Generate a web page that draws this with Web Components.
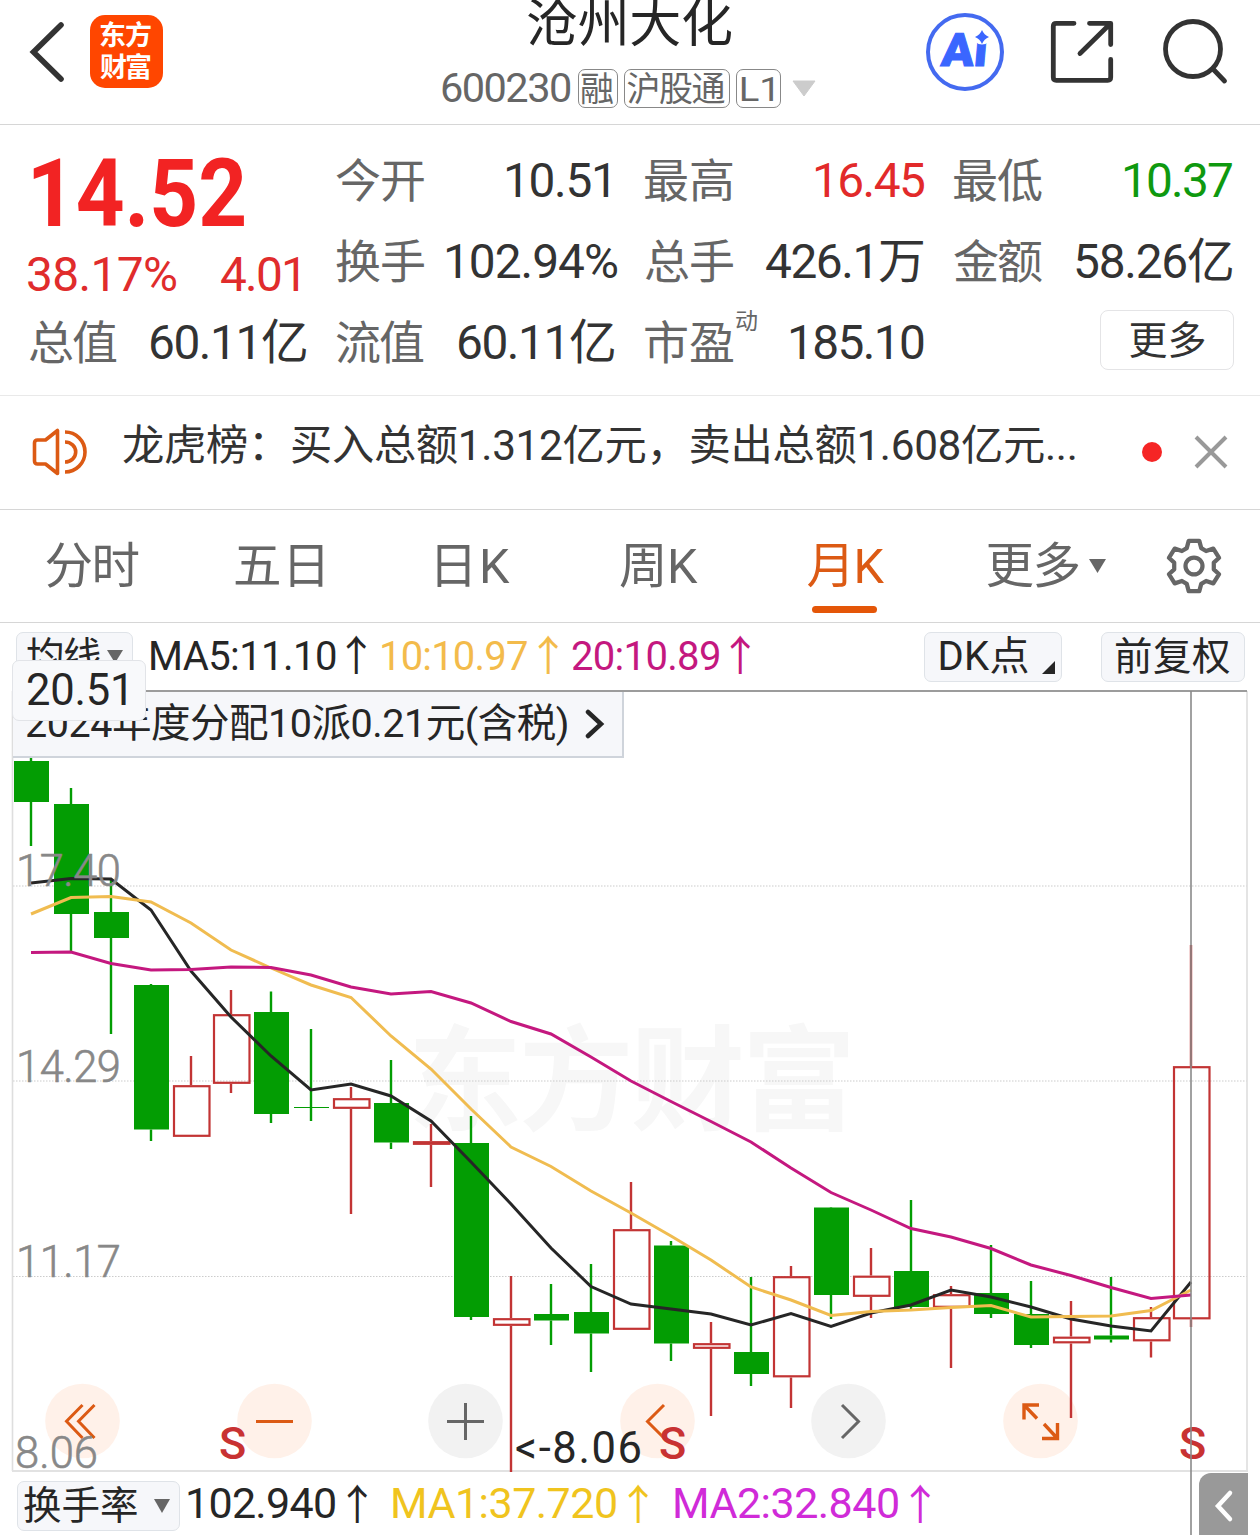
<!DOCTYPE html>
<html lang="zh-CN">
<head>
<meta charset="utf-8">
<title>沧州大化 600230</title>
<style>
    html, body { margin: 0; padding: 0; }
    body {
        width: 1260px;
        height: 1535px;
        overflow: hidden;
        background: #fff;
        color: #333;
        font-family: Roboto, "Noto Sans CJK SC", sans-serif;
    }
</style>
</head>
<body>
<stock-page></stock-page>

<script>
class BaseElement extends HTMLElement{
    constructor(){
        super();
        this.attachShadow({mode: "open"});
    }
    render(){
        const template = document.createElement("template");
        template.innerHTML = `<style>${this.getStyle()}</style>${this.getTemplate()}`;
        this.shadowRoot.replaceChildren(template.content.cloneNode(true));
    }
    connectedCallback(){
        this.render();
    }
}

class StockPage extends BaseElement{
    getTemplate(){
        return `
            <stock-header></stock-header>
            <stock-quote></stock-quote>
            <stock-notice></stock-notice>
            <period-tabs></period-tabs>
            <ma-bar></ma-bar>
            <k-chart></k-chart>
            <turnover-bar></turnover-bar>
        `;
    }
    getStyle(){
        return `
            :host { display: flex; flex-direction: column; width: 1260px; height: 1535px; }
        `;
    }
}

class StockHeader extends BaseElement{
    getTemplate(){
        return `
            <svg class="back" width="40" height="64" viewBox="0 0 40 64">
                <path d="M34 5 6.500 32 34 59" fill="none" stroke="#333" stroke-width="5.6" stroke-linecap="round"/>
            </svg>
            <div class="logo">
                <fit-text w="51">东方</fit-text>
                <fit-text w="51">财富</fit-text>
            </div>
            <div class="title">
                <fit-text class="name" w="204">沧州大化</fit-text>
                <div class="sub">
                    <fit-text class="code" w="128">600230</fit-text>
                    <span class="tag" style="width:38px"><fit-text w="31">融</fit-text></span>
                    <span class="tag" style="width:104px"><fit-text w="97">沪股通</fit-text></span>
                    <span class="tag" style="width:43px"><fit-text w="33" squeeze>L1</fit-text></span>
                    <svg class="down" width="24" height="17" viewBox="0 0 24 17">
                        <path d="M1 1h22L12 16z" fill="#ccc" stroke="#ccc" stroke-linejoin="round"/>
                    </svg>
                </div>
            </div>
            <svg class="ai" width="80" height="80" viewBox="0 0 80 80">
                <circle cx="40" cy="40" r="37" fill="none" stroke="#446af0" stroke-width="4"/>
                <text x="15.500" y="54.500" font-family="Roboto" font-weight="900" font-size="46" fill="#3a66ff" stroke="#3a66ff" textLength="46" lengthAdjust="spacingAndGlyphs" transform="translate(4.500 0) skewX(-5)">Ai</text>
                <circle cx="57" cy="23" r="9.500" fill="#fff"/>
                <path d="M57 18q2 5 7 7-5 2-7 7-2-5-7-7 5-2 7-7z" fill="#3a66ff"/>
            </svg>
            <svg class="share" width="66" height="66" viewBox="0 0 66 66" fill="none" stroke="#333" stroke-width="4.8" stroke-linecap="round" stroke-linejoin="round">
                <path d="M24 4.3H6.3q-3 0-3 3V58.300q0 3 3 3H57.700q3 0 3-3V40.500M39.500 4.300H60.700V25.500M60 5 30 34.500"/>
            </svg>
            <svg class="search" width="70" height="70" viewBox="0 0 70 70" fill="none" stroke="#333" stroke-width="4.8" stroke-linecap="round">
                <circle cx="33" cy="32" r="27.500"/>
                <path d="M53 52 64.500 64"/>
            </svg>
        `;
    }
    getStyle(){
        return `
            :host { display: flex; box-sizing: border-box; height: 125px; border-bottom: 1px solid #d6d6d6; }
            svg, .logo { flex: none; }
            .back { margin: 20px 0 0 27px; }
            .logo {
                display: flex; flex-direction: column; box-sizing: border-box;
                width: 73px; height: 73px; margin: 15px 0 0 23px; padding: 6px 0 0 10px;
                border-radius: 15px; background: #ff4600; color: #fff;
                font-size: 27px; font-weight: 700; line-height: 31.5px;
            }
            .title { width: 376px; margin-left: 277px; }
            .name { margin-left: 88px; font-size: 52px; line-height: 50px; color: #262626; }
            .sub { display: flex; align-items: center; height: 40px; margin-top: 18px; color: #666; }
            .code { margin: 0 8px 0 2px; font-size: 41.5px; line-height: 40px; }
            .tag {
                display: flex; justify-content: center; box-sizing: content-box; height: 37px; margin-right: 6px;
                border: 1px solid #888; border-radius: 7px; font-size: 34px; line-height: 38px;
            }
            .tag fit-text { margin-right: 2px; }
            .down { margin-left: 5px; }
            .ai { margin: 12px 0 0 109px; }
            .share { margin: 19px 0 0 45px; }
            .search { margin: 17px 0 0 44px; }
        `;
    }
}

class StockQuote extends BaseElement{
    getTemplate(){
        return `
            <div class="last">
                <fit-text class="price" w="211" squeeze>14.52</fit-text>
                <div class="change">
                    <fit-text w="148">38.17%</fit-text>
                    <fit-text w="78">4.01</fit-text>
                </div>
            </div>
            <quote-cell label="今开" w="103" end="7">10.51</quote-cell>
            <quote-cell label="最高" w="109" end="1" style="--value:#e22a2a">16.45</quote-cell>
            <quote-cell label="最低" w="108" end="1" style="--value:#0f990f">10.37</quote-cell>
            <quote-cell label="换手" w="171" end="-1">102.94%</quote-cell>
            <quote-cell label="总手" w="157" end="2">426.1万</quote-cell>
            <quote-cell label="金额" w="156" end="1">58.26亿</quote-cell>
            <quote-cell label="总值" w="155" end="1">60.11亿</quote-cell>
            <quote-cell label="流值" w="155" end="2">60.11亿</quote-cell>
            <quote-cell label="市盈" mark="动" w="134" end="1">185.10</quote-cell>
            <div class="more"><fit-text w="75">更多</fit-text></div>
        `;
    }
    getStyle(){
        return `
            :host {
                display: grid; box-sizing: border-box; height: 271px; padding: 16px 27px 0 28px;
                grid-template-columns: 279px 281px 281px 280px; grid-template-rows: repeat(3, 81px);
                column-gap: 28px; border-bottom: 1px solid #e9e9e9;
            }
            .last { grid-row: span 2; color: #f22323; }
            .price { margin-left: 5px; font-size: 95px; font-weight: 700; line-height: 105px; }
            .change {
                display: flex; justify-content: space-between; padding-right: 8px;
                font-size: 47.8px; line-height: 59px; color: #e02c2c;
            }
            .more {
                display: flex; justify-content: center; box-sizing: border-box; width: 134px; height: 60px;
                margin: 7px -1px 0 auto;
                border: 1.5px solid #e4e4e6; border-radius: 8px; font-size: 39px; line-height: 60px;
            }
        `;
    }
}

class QuoteCell extends BaseElement{
    getTemplate(){
        const mark = this.getAttribute("mark");
        return `
            <fit-text class="label" w="88">${this.getAttribute("label")}</fit-text>
            ${mark ? `<fit-text class="mark" w="21">${mark}</fit-text>` : ""}
            <fit-text class="value" w="${this.getAttribute("w")}" style="margin-right:${this.getAttribute("end")}px">${this.textContent}</fit-text>
        `;
    }
    getStyle(){
        return `
            :host { display: flex; line-height: 81px; }
            .label { margin-left: 1px; font-size: 46px; color: #666; }
            .mark { margin-left: 3px; font-size: 23px; line-height: 38px; color: #666; }
            .value { margin-left: auto; font-size: 47.8px; color: var(--value, #333); }
        `;
    }
}

class StockNotice extends BaseElement{
    getTemplate(){
        return `
            <svg width="56" height="48" viewBox="0 0 56 48" fill="none" stroke="#dc5a14" stroke-width="3.6">
                <path d="M25.500 2.500V45.500L13.500 36H5.500Q2.500 36 2.500 33V15Q2.500 12 5.500 12H13.500z" stroke-linejoin="round"/>
                <path d="M33 14a10.700 10 0 0 1 0 20M33 4a20 20 0 0 1 0 40"/>
            </svg>
            <fit-text w="952">龙虎榜：买入总额1.312亿元，卖出总额1.608亿元...</fit-text>
            <i></i>
            <svg class="close" width="34" height="34" viewBox="0 0 34 34">
                <path d="M2 2 32 32M32 2 2 32" stroke="#999" stroke-width="4"/>
            </svg>
        `;
    }
    getStyle(){
        return `
            :host {
                display: flex; align-items: center; box-sizing: border-box; height: 114px;
                padding: 0 32px 2px; border-bottom: 1px solid #d6d6d6;
            }
            fit-text { margin: 0 67px 11px 35px; font-size: 42.3px; line-height: 60px; }
            i { width: 20px; height: 20px; border-radius: 50%; background: #f52525; }
            .close { margin-left: 32px; }
        `;
    }
}

class PeriodTabs extends BaseElement{
    getTemplate(){
        return `
            <div><fit-text w="92">分时</fit-text></div>
            <div><fit-text w="88">五日</fit-text></div>
            <div><fit-text w="73">日K</fit-text></div>
            <div><fit-text w="78">周K</fit-text></div>
            <div class="active"><fit-text w="77">月K</fit-text><b></b></div>
            <div class="more">
                <fit-text w="91">更多</fit-text>
                <svg width="17" height="14" viewBox="0 0 17 14"><path d="M0 0h17L8.500 14z" fill="#666"/></svg>
            </div>
            <div>
                <svg width="56" height="58" viewBox="-29 -30 58 60" fill="none" stroke="#666" stroke-width="4.400">
                    <path d="M-5.500-26H5.500L7.500-18.500 12.500-15.500 20-18 26-8.500 20.500-3.500V3.500L26 8.500 20 18 12.500 15.500 7.500 18.500 5.500 26H-5.500L-7.500 18.500-12.500 15.500-20 18-26 8.500-20.500 3.500V-3.500L-26-8.500-20-18-12.500-15.500-7.500-18.500z" stroke-linejoin="round"/>
                    <circle r="8.800"/>
                </svg>
            </div>
        `;
    }
    getStyle(){
        return `
            :host {
                display: grid; grid-template-columns: 185px 188px 201px 170px 204px 197px 98px;
                box-sizing: border-box; height: 113px; border-bottom: 1px solid #d6d6d6;
                font-size: 48.5px; line-height: 114px; color: #666;
            }
            div { display: flex; justify-content: center; align-items: center; height: 112px; }
            fit-text { height: 112px; }
            .active { flex-direction: column; justify-content: flex-start; color: #dc5a14; }
            .active b { width: 65px; height: 7px; margin: -16px 4px 0 0; border-radius: 4px; background: #e45608; }
            .more svg { margin-left: 10px; }
        `;
    }
}

class MaBar extends BaseElement{
    getTemplate(){
        return `
            <bar-button style="width:117px">
                <fit-text w="74" style="margin-left:1px">均线</fit-text>
                <svg width="16" height="13" viewBox="0 0 16 13" style="margin-left:6px"><path d="M0 0h16L8 13z" fill="#666"/></svg>
            </bar-button>
            <fit-text w="185" style="margin-left:18px">MA5:11.10</fit-text>
            <up-arrow style="margin-left:10px"></up-arrow>
            <fit-text w="145" style="margin-left:15px;color:#f3bb4b">10:10.97</fit-text>
            <up-arrow style="margin-left:11px;color:#f3bb4b"></up-arrow>
            <fit-text w="147" style="margin-left:13px;color:#c4187f">20:10.89</fit-text>
            <up-arrow style="margin-left:11px;color:#c4187f"></up-arrow>
            <bar-button style="width:138px;margin-left:auto">
                <fit-text w="88" style="margin-left:2px;font-size:40px">DK点</fit-text>
                <svg width="13" height="13" viewBox="0 0 13 13" style="margin:22px -7px 0 13px"><path d="M13 0v13H0z" fill="#262626"/></svg>
            </bar-button>
            <bar-button style="width:144px;margin-left:39px"><fit-text w="114">前复权</fit-text></bar-button>
        `;
    }
    getStyle(){
        return `
            :host {
                display: flex; align-items: center; height: 67px; padding: 0 15px 0 16px; color: #262626;
                font-size: 40px; line-height: 67px;
            }
            bar-button fit-text { font-size: 38.5px; }
        `;
    }
}

class BarButton extends BaseElement{
    getTemplate(){
        return `<slot></slot>`;
    }
    getStyle(){
        return `
            :host {
                display: flex; align-items: center; justify-content: center; box-sizing: border-box;
                height: 50px; line-height: 51px; border: 1px solid #dfe3e8; border-radius: 7px; background: #f6f7fa;
            }
        `;
    }
}

class UpArrow extends BaseElement{
    getTemplate(){
        return `<fit-text w="21">↑</fit-text>`;
    }
    getStyle(){
        return `
            :host { display: block; margin-bottom: 6px; font-family: "Noto Sans CJK SC", sans-serif; font-size: 41.5px; }
        `;
    }
}

class KChart extends BaseElement{
    // [up, high, body top, body bottom, low], one per month
    getCandles(){
        return [
            [0, 757, 761, 802, 846], [0, 788, 804, 914, 951], [0, 880, 912, 938, 1034],
            [0, 984, 985, 1129.5, 1141], [1, 1056, 1085, 1137, 1137], [1, 990, 1014, 1084, 1093],
            [0, 991.5, 1012, 1114, 1123], [0, 1029, 1107, 1108, 1121], [1, 1087, 1098, 1109, 1214],
            [0, 1060, 1103, 1142.5, 1149], [1, 1124, 1141, 1145, 1187], [0, 1116, 1143, 1317, 1320],
            [1, 1276, 1318, 1326, 1472], [0, 1284, 1314, 1320.5, 1345], [0, 1264, 1312, 1333.5, 1372],
            [1, 1182, 1229, 1330, 1330], [0, 1241, 1245.5, 1343.5, 1361], [1, 1322, 1343, 1349, 1416],
            [0, 1277, 1352, 1374, 1386], [1, 1266, 1276, 1377.5, 1408], [0, 1207, 1207.5, 1295, 1319],
            [1, 1248, 1275.5, 1297, 1318], [0, 1200, 1271, 1307, 1309], [1, 1286, 1294, 1308, 1368],
            [0, 1245, 1293, 1314, 1318], [0, 1281, 1314, 1345, 1348], [1, 1301, 1336.5, 1343.5, 1418],
            [0, 1277, 1335.5, 1339.5, 1342.5], [1, 1307, 1317, 1341.5, 1357.5], [1, 945, 1066, 1319.5, 1327]
        ];
    }
    getLines(){
        return {
            "#262626": [883, 878.5, 879, 910, 971, 1017, 1056, 1090, 1084, 1096, 1121, 1162, 1204, 1248, 1286.5, 1304, 1309, 1314, 1325, 1313.5, 1326.5, 1313, 1305, 1290, 1297, 1307, 1319, 1326, 1331, 1282],
            "#f0bc50": [914, 897.5, 896.5, 902, 923, 950, 968, 985, 997.5, 1036, 1069, 1109, 1147, 1166.5, 1191, 1213, 1236, 1260, 1287, 1300, 1315.5, 1311.5, 1310, 1307.5, 1305.5, 1317, 1316.5, 1316, 1310.5, 1290],
            "#c4187f": [952.5, 952, 963.5, 970, 969.5, 967, 967.5, 975, 987, 994, 991.5, 1003, 1021.5, 1034, 1057, 1081, 1101.5, 1121.5, 1142, 1168, 1192.5, 1210, 1228.5, 1237, 1248.5, 1265, 1275.5, 1287.5, 1298.5, 1295]
        };
    }
    drawCandle([up, high, top, bottom, low], i){
        const x = 31 + i * 40;
        const color = up ? "#c23434" : "#039d03";
        const wick = `<path d="M${x} ${high}V${top}M${x} ${bottom}V${low}" stroke="${color}" stroke-width="2.4"/>`;
        const body = up
            ? `<rect x="${x - 17}" y="${top + 1.2}" width="35.5" height="${bottom - top - 2.4}" fill="none" stroke="${color}" stroke-width="2.2"/>`
            : `<rect x="${x - 17}" y="${top}" width="35" height="${bottom - top}" fill="#039d03"/>`;
        return wick + body;
    }
    drawLine([color, values]){
        const points = values.map((y, i) => `${31 + i * 40},${y}`).join(" ");
        return `<polyline points="${points}" fill="none" stroke="${color}" stroke-width="3"/>`;
    }
    getTemplate(){
        return `
            <svg width="1260" height="845" viewBox="0 690 1260 845">
                <text class="watermark" x="408" y="1121" textLength="448">东方财富</text>
                <path d="M13 886H1247M13 1081H1247M13 1276.500H1247" stroke="#ccc" stroke-width="1.200" stroke-dasharray="1.500 1.500"/>
                <path d="M12.500 691V1471M1247 691V1471" stroke="#dedede" stroke-width="1.600"/>
                <path d="M12 1471H1248" stroke="#e2e2e2" stroke-width="2"/>
                <path d="M12 691H1247" stroke="#9c9c9c" stroke-width="2"/>
                <g fill="#fff1e9">
                    <circle cx="82.500" cy="1421" r="37.300"/><circle cx="274.500" cy="1421" r="37.300"/>
                    <circle cx="657.500" cy="1421" r="37.300"/><circle cx="1040.500" cy="1421" r="37.300"/>
                </g>
                <g fill="#f2f2f2"><circle cx="465.500" cy="1421" r="37.300"/><circle cx="848.500" cy="1421" r="37.300"/></g>
                <g fill="none" stroke="#dc5a14" stroke-width="3">
                    <path d="M82.500 1405 66.500 1421.300 82.500 1438M94.500 1405 78.500 1421.300 94.500 1438"/>
                    <path d="M256 1421.500H293"/>
                    <path d="M664 1405 647.500 1421.500 664 1438"/>
                    <path d="M1039 1405H1024V1419.500M1024.500 1405.500 1037 1418.500M1042 1438.500H1057.500V1423M1057 1438 1044 1424" stroke-width="3.400"/>
                </g>
                <g fill="none" stroke="#666" stroke-width="3">
                    <path d="M447 1421.500H484M465.500 1403V1440"/>
                    <path d="M842 1405 858.500 1421.500 842 1438"/>
                </g>
                ${this.getCandles().map(this.drawCandle).join("")}
                ${Object.entries(this.getLines()).map(this.drawLine).join("")}
                <g class="axis">
                    <text x="16" y="886" textLength="105">17.40</text>
                    <text x="16" y="1082" textLength="105">14.29</text>
                    <text x="16" y="1277" textLength="105">11.17</text>
                    <text x="15" y="1468" textLength="83">8.06</text>
                </g>
                <text class="low" x="515" y="1463" textLength="127">&lt;-8.06</text>
                <g class="signal">
                    <text x="232.500" y="1459">S</text><text x="672.500" y="1459">S</text><text x="1192.500" y="1459">S</text>
                </g>
                <path d="M1191 691V1535" stroke="#8a8a8a" stroke-width="1.600"/>
            </svg>
            <div class="event">
                <fit-text w="541">2024年度分配10派0.21元(含税)</fit-text>
                <svg width="20" height="30" viewBox="0 0 20 30"><path d="M3 3 16 15 3 27" fill="none" stroke="#262626" stroke-width="4.500" stroke-linecap="round"/></svg>
            </div>
            <div class="top-price"><fit-text w="98">20.51</fit-text></div>
        `;
    }
    getStyle(){
        return `
            :host { display: block; position: relative; height: 782px; color: #262626; }
            svg { display: block; }
            .watermark { font-family: "Noto Sans CJK SC"; font-size: 114px; font-weight: 700; fill: #f7f7f7; }
            .axis { font-size: 43.5px; font-weight: 300; fill: #888; stroke: #888; stroke-width: 0.6px; }
            .low { font-size: 43.5px; fill: #262626; }
            .signal { font-size: 45px; font-weight: 500; fill: #c83232; text-anchor: middle; }
            .event {
                position: absolute; left: 13px; top: 2px; display: flex; align-items: center; box-sizing: border-box;
                width: 611px; height: 66px; padding-left: 13px; background: #f6f7fa;
                border: solid #cfd4db; border-width: 0 2px 2px 0; font-size: 39.5px; line-height: 62px;
            }
            .event svg { margin-left: 18px; }
            .top-price {
                position: absolute; left: 12px; top: -30px; box-sizing: border-box; width: 134px; height: 61px;
                padding-left: 15px; border: 1.5px solid #e2e4e8; border-radius: 7px; background: #f8f9fb;
                font-size: 43.5px; line-height: 59px;
            }
        `;
    }
}

class TurnoverBar extends BaseElement{
    getTemplate(){
        return `
            <bar-button style="width:163px">
                <fit-text w="113" style="font-size:38.5px">换手率</fit-text>
                <svg width="16" height="14" viewBox="0 0 16 14" style="margin:1px 3px 0 17px"><path d="M0 0h16L8 14z" fill="#666"/></svg>
            </bar-button>
            <fit-text w="147" style="margin-left:8px">102.940</fit-text>
            <up-arrow style="margin-left:12px"></up-arrow>
            <fit-text w="223" style="margin-left:25px;color:#f0c41e">MA1:37.720</fit-text>
            <up-arrow style="margin-left:12px;color:#f0c41e"></up-arrow>
            <fit-text w="223" style="margin-left:26px;color:#d02bd8">MA2:32.840</fit-text>
            <up-arrow style="margin-left:12px;color:#d02bd8"></up-arrow>
            <div class="drawer">
                <svg width="22" height="34" viewBox="0 0 22 34"><path d="M17 4 5 17 17 30" fill="none" stroke="#fff" stroke-width="4.500" stroke-linecap="round"/></svg>
            </div>
        `;
    }
    getStyle(){
        return `
            :host {
                display: flex; align-items: center; height: 63px; padding: 0 12px 0 17px; color: #262626;
                font-size: 43px; line-height: 67px;
            }
            bar-button { margin-top: 4px; }
            up-arrow { margin-bottom: 3px; }
            .drawer {
                display: flex; align-items: center; justify-content: center; width: 49px; height: 62px;
                margin: 1px 0 0 auto; padding-top: 4px; box-sizing: border-box; border-radius: 12px 0 0 0; background: #999;
            }
        `;
    }
}

// Text whose visible width is exactly "w": tracked by default, scaled with "squeeze"
class FitText extends BaseElement{
    getTemplate(){
        return `<span><slot></slot></span>`;
    }
    getStyle(){
        return `
            :host { display: block; flex: none; width: ${this.getAttribute("w")}px; white-space: nowrap; }
            span { display: inline-block; transform-origin: 0 50%; }
        `;
    }
    connectedCallback(){
        this.render();
        const span = this.shadowRoot.querySelector("span");
        const css = getComputedStyle(this);
        const ctx = document.createElement("canvas").getContext("2d");
        ctx.font = `${css.fontWeight} ${css.fontSize} ${css.fontFamily}`;
        const text = this.textContent.trim();
        const size = ctx.measureText(text);
        const left = size.actualBoundingBoxLeft;
        const bearings = size.width - left - size.actualBoundingBoxRight;
        span.style.letterSpacing = "0.01px";
        const ink = span.getBoundingClientRect().width - bearings;
        const width = Number(this.getAttribute("w"));
        if(this.hasAttribute("squeeze")){
            span.style.transform = `scaleX(${width / ink}) translateX(${left}px)`;
            return;
        }
        if(text.length > 1){
            span.style.letterSpacing = `${(width - ink) / (text.length - 1)}px`;
            span.style.marginLeft = `${left}px`;
        }else{
            span.style.marginLeft = `${left + (width - ink) / 2}px`;
        }
    }
}

customElements.define("stock-page", StockPage);
customElements.define("stock-header", StockHeader);
customElements.define("stock-quote", StockQuote);
customElements.define("quote-cell", QuoteCell);
customElements.define("stock-notice", StockNotice);
customElements.define("period-tabs", PeriodTabs);
customElements.define("ma-bar", MaBar);
customElements.define("bar-button", BarButton);
customElements.define("up-arrow", UpArrow);
customElements.define("k-chart", KChart);
customElements.define("turnover-bar", TurnoverBar);
customElements.define("fit-text", FitText);
</script>
</body>
</html>
